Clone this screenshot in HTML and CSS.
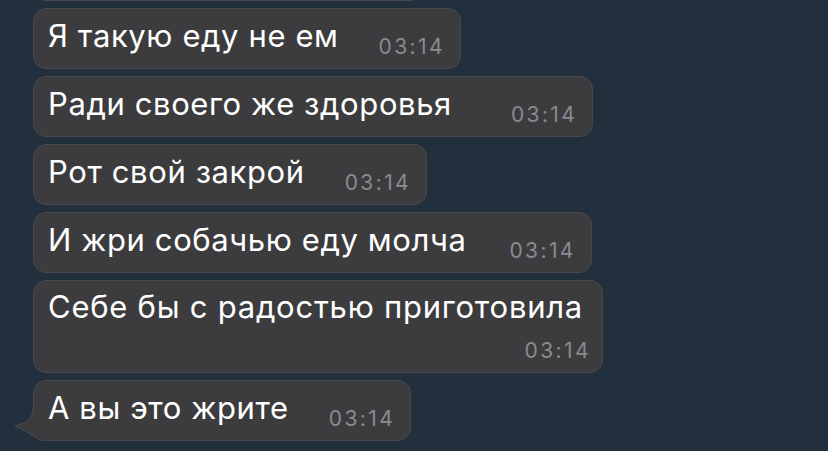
FILE: index.html
```html
<!DOCTYPE html>
<html lang="ru">
<head>
    <meta charset="UTF-8">
    <meta name="viewport" content="width=device-width, initial-scale=1.0">
    <title>Чат</title>
    <link rel="stylesheet" href="styles.css">
</head>
<body>

    <div class="chat">
        <div class="bubble bubble-cut">
            <span class="text">&nbsp;</span>
        </div>
        <div class="bubble">
            <span class="text">Я такую еду не ем</span>
            <span class="time">03:14</span>
        </div>
        <div class="bubble">
            <span class="text">Ради своего же здоровья</span>
            <span class="time time-wide">03:14</span>
        </div>
        <div class="bubble">
            <span class="text">Рот свой закрой</span>
            <span class="time">03:14</span>
        </div>
        <div class="bubble">
            <span class="text">И жри собачью еду молча</span>
            <span class="time time-mid">03:14</span>
        </div>
        <div class="bubble bubble-wrap">
            <span class="text">Себе бы с радостью приготовила</span>
            <span class="time">03:14</span>
        </div>
        <div class="bubble bubble-last">
            <svg class="tail" width="32" height="34" viewBox="0 0 32 34">
                <path d="M20 0 C20 10 15 16 2 19 C10 22 17 28 30 34 L32 34 L32 0 Z" fill="#3c3b3e"/>
                <path d="M20 0 C20 10 15 16 2 19 C10 22 17 28 30 34" fill="none" stroke="#49494d" stroke-width="1"/>
            </svg>
            <span class="text">А вы это жрите</span>
            <span class="time">03:14</span>
        </div>
    </div>

</body>
</html>
```

FILE: styles.css
```css
html, body {
    margin: 0;
    padding: 0;
    height: 100%;
    overflow: hidden;
}
body {
    background-color: #22303e;
    font-family: Inter, Roboto, "Liberation Sans", sans-serif;
    color: #fff;
}
.chat {
    display: flex;
    flex-direction: column;
    align-items: flex-start;
    gap: 7px;
    padding-left: 33px;
    margin-top: -60px;
}
.bubble {
    position: relative;
    display: flex;
    align-items: flex-end;
    box-sizing: border-box;
    height: 61px;
    padding: 0 15px 10px 14px;
    background-color: #3c3b3e;
    border: 1px solid #49494d;
    border-radius: 13px;
}
.bubble-cut {
    width: 390px;
}
.text {
    position: relative;
    z-index: 1;
    font-size: 31px;
    line-height: 36px;
    letter-spacing: 0.6px;
    white-space: nowrap;
    margin-bottom: 4px;
}
.time {
    font-size: 21px;
    line-height: 22px;
    letter-spacing: 2.4px;
    color: #8b8a8e;
    margin-left: 40px;
}
.time-wide {
    margin-left: 59px;
}
.time-mid {
    margin-left: 43px;
}
.bubble-wrap {
    flex-direction: column;
    align-items: flex-end;
    height: 93px;
    padding-top: 8px;
    padding-right: 11px;
}
.bubble-wrap .text {
    align-self: flex-start;
    margin-bottom: 0;
    margin-right: 8px;
    letter-spacing: 0.75px;
}
.bubble-wrap .time {
    margin-left: 0;
    margin-top: auto;
}
/* хвостик у последнего сообщения */
.tail {
    position: absolute;
    left: -21px;
    bottom: -1px;
}
```
